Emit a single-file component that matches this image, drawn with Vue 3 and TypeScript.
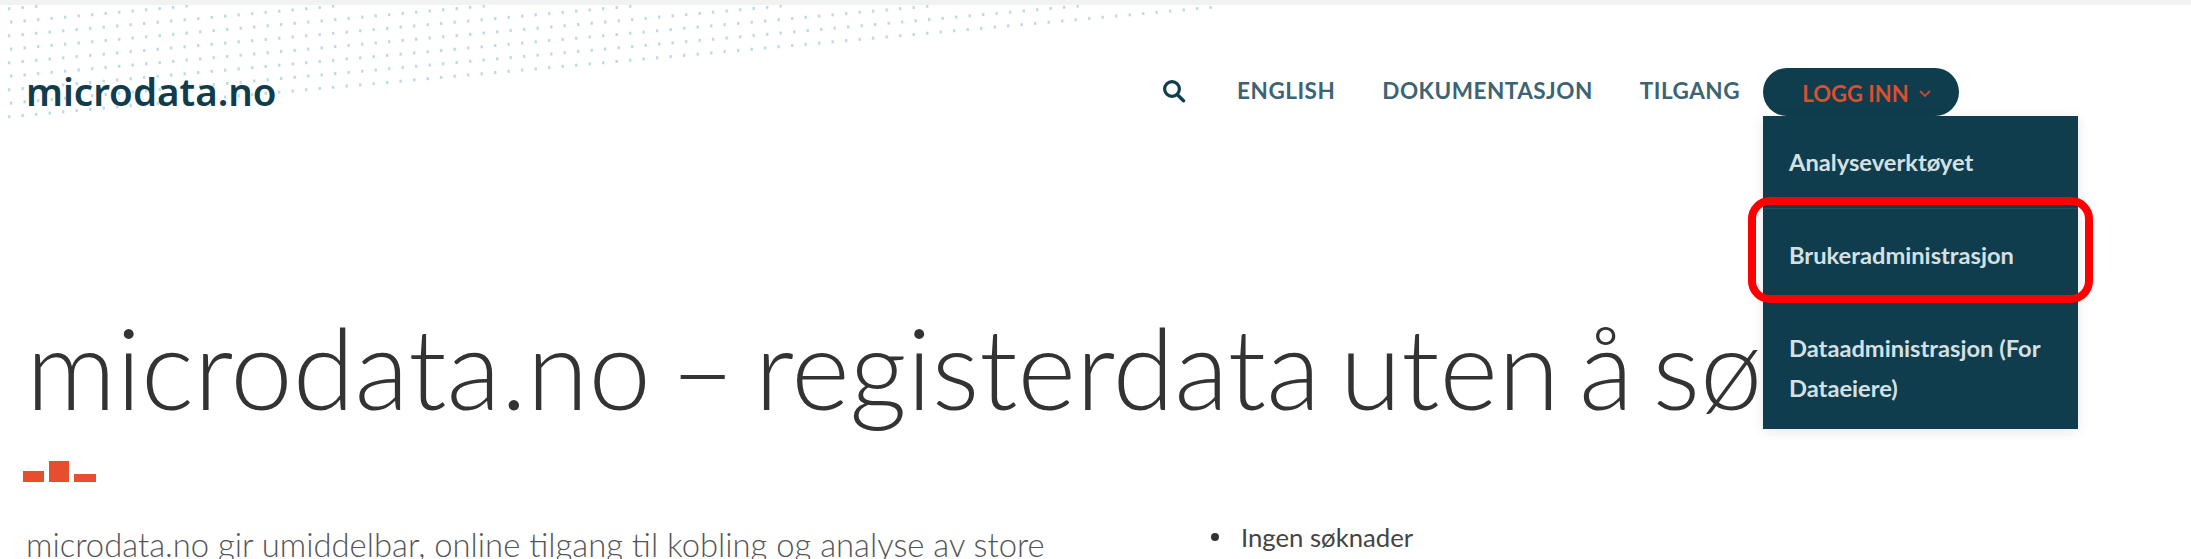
<script setup lang="ts">
interface Dot { x: number; y: number }
const dots: Dot[] = []
for (let row = 0; row < 10; row++) {
  for (let col = 0; col < 92; col++) {
    const x = 8 + col * 13.5 + (row % 2 ? 2 : 0)
    const y = 116 - row * 13.5 - x * 0.091
    if (y > 4 && x < 1215) dots.push({ x, y })
  }
}
const navLinks = ['ENGLISH', 'DOKUMENTASJON', 'TILGANG']
const menu = ['Analyseverktøyet', 'Brukeradministrasjon', 'Dataadministrasjon (For Dataeiere)']
</script>

<template>
  <div class="page">
    <svg class="dots" width="1240" height="125" aria-hidden="true">
      <rect v-for="(d, i) in dots" :key="i" :x="d.x" :y="d.y" width="2.4" height="3" fill="#bedbe4" />
    </svg>
    <div class="topline"></div>
    <header class="header">
      <a class="logo">microdata.no</a>
      <nav class="nav">
        <svg class="search" width="24" height="24" viewBox="0 0 24 24">
          <circle cx="10" cy="10" r="7.4" fill="none" stroke="#103d4d" stroke-width="3.2" />
          <path d="M15.5 15.8l6 6" stroke="#103d4d" stroke-width="3.4" stroke-linecap="round" />
        </svg>
        <a v-for="l in navLinks" :key="l" class="navlink">{{ l }}</a>
        <div class="login-wrap">
          <button class="login">
            LOGG INN
            <svg width="14" height="9" viewBox="0 0 14 9"><path d="M2 2l5 5 5-5" fill="none" stroke="#c9492f" stroke-width="1.8" /></svg>
          </button>
          <ul class="menu">
            <li v-for="m in menu" :key="m" class="item">{{ m }}</li>
          </ul>
          <div class="highlight"></div>
        </div>
      </nav>
    </header>
    <main class="main">
      <h1 class="title">microdata.no – registerdata uten å søke</h1>
      <div class="bars"><i class="b1"></i><i class="b2"></i><i class="b3"></i></div>
      <div class="cols">
        <p class="lead">microdata.no gir umiddelbar, online tilgang til kobling og analyse av store</p>
        <ul class="list"><li class="bullet">Ingen søknader</li></ul>
      </div>
    </main>
  </div>
</template>

<style>
html, body { margin: 0; background: #fff; overflow: hidden; }
</style>

<style scoped>
.page { position: relative; width: 2191px; height: 559px; overflow: hidden; background: #fff; font-family: "Lato", "Noto Sans", sans-serif; }
.topline { position: relative; height: 5px; background: #f1f2f2; }
.dots { position: absolute; left: 0; top: 0; }
.header { position: relative; z-index: 1; display: flex; justify-content: space-between; height: 111px; padding: 63px 0 0 26px; box-sizing: border-box; }
.logo { font-family: "Noto Sans", sans-serif; font-size: 38.5px; font-weight: 600; line-height: 46px; color: #103d4d; }
.nav { display: flex; align-items: flex-start; margin-right: 232px; }
.search { margin: 11px 51px 0 0; }
.navlink { font-size: 22.5px; font-weight: 700; line-height: 30px; letter-spacing: .5px; color: #3c6472; margin: 8px 47px 0 0; }
.login-wrap { position: relative; margin-left: -24px; width: 196px; }
.login { display: flex; align-items: center; gap: 9px; width: 196px; height: 48px; border: 0; border-radius: 24px; background: #103d4d; color: #d8502f; font: 700 22px "Lato", sans-serif; justify-content: center; padding: 2px 0 0 12px; box-sizing: border-box; }
.menu { position: absolute; left: 0; top: 48px; width: 315px; height: 313px; margin: 0; padding: 0; list-style: none; background: #103d4d; box-shadow: 0 2px 12px rgba(0,0,0,.1); }
.item { padding: 26px 26px; color: #d5e0e3; font-size: 23.7px; font-weight: 700; line-height: 40px; border-bottom: 1px solid rgba(255,255,255,.08); }
.item:last-child { border-bottom: 0; }
.highlight { position: absolute; left: -15px; top: 129px; width: 345px; height: 106px; border: 8px solid #f00; border-radius: 22px; box-sizing: border-box; }
.main { padding: 0 26px; }
.title { margin: 191px 0 0; font-size: 112px; font-weight: 300; line-height: 120px; word-spacing: -11px; color: #333; white-space: nowrap; }
.bars { display: flex; align-items: flex-end; gap: 5px; margin: 34px 0 0 -3px; height: 21px; }
.bars i { display: block; background: #e84d30; }
.b1 { width: 21px; height: 11px; }
.b2 { width: 20px; height: 21px; }
.b3 { width: 22px; height: 8px; }
.cols { display: flex; margin-top: 43px; }
.lead { margin: 0; width: 1180px; font-size: 32.8px; line-height: 40px; color: #555; font-weight: 300; white-space: nowrap; }
.list { margin: -4px 0 0; padding: 0 0 0 5px; list-style: none; font-size: 25.7px; line-height: 32px; color: #444; white-space: nowrap; }
.bullet { display: flex; align-items: center; gap: 22px; }
.bullet::before { content: ""; width: 8px; height: 8px; border-radius: 50%; background: #333; }
</style>
